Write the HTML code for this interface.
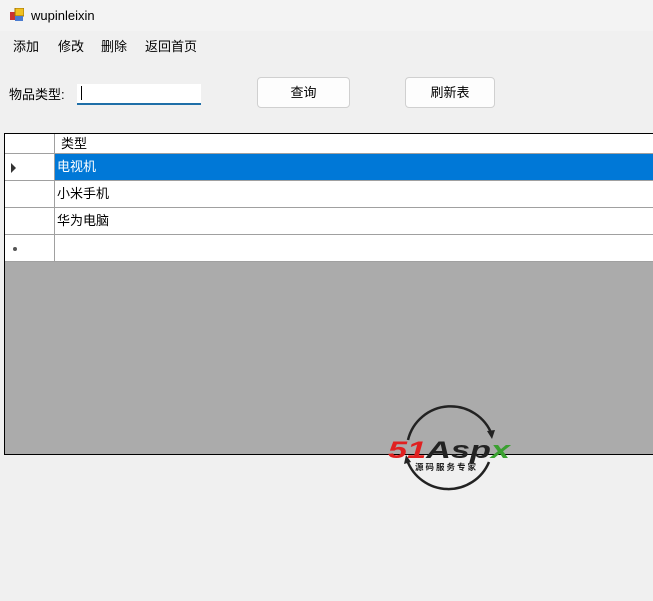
<!DOCTYPE html>
<html><head><meta charset="utf-8"><style>
body{margin:0;width:653px;height:601px;background:#f0f0f0;font-family:"Liberation Sans","Noto Sans CJK SC",sans-serif;font-size:12px;color:#000;position:relative;overflow:hidden}
.a{position:absolute}
.title{left:0;top:0;width:653px;height:31px;background:#f3f3f3}
.btn{background:#fdfdfd;border:1px solid #d0d0d0;border-radius:4px;text-align:center;line-height:29px;font-size:13px}
.grid{left:4px;top:133px;width:649px;height:322px;border:1px solid #000;border-right:none;background:#ababab;box-sizing:border-box}
.row{position:absolute;left:0;width:649px;height:27px;background:#fff;border-bottom:1px solid #a0a0a0;box-sizing:border-box}
.rh{position:absolute;left:0;top:0;width:50px;height:100%;border-right:1px solid #a0a0a0;box-sizing:border-box}
.cell{position:absolute;left:50px;top:0;right:0;height:100%;padding-left:2px;line-height:26px;font-size:13px}
</style></head><body>
<div class="a title"></div>
<svg class="a" style="left:10px;top:8px" width="14" height="14"><rect x="0" y="4" width="6" height="8" fill="#c33"/><rect x="5" y="0" width="9" height="8" fill="#f0c020" stroke="#a07000" stroke-width="1"/><rect x="5" y="8" width="8" height="5" fill="#4a7bd0"/></svg>
<div class="a" style="left:31px;top:8px;font-size:13px">wupinleixin</div>
<div class="a" style="left:13px;top:36px;font-size:13px">添加</div>
<div class="a" style="left:58px;top:36px;font-size:13px">修改</div>
<div class="a" style="left:101px;top:36px;font-size:13px">删除</div>
<div class="a" style="left:145px;top:36px;font-size:13px">返回首页</div>
<div class="a" style="left:9px;top:84px;font-size:13px">物品类型:</div>
<div class="a" style="left:77px;top:84px;width:124px;height:19px;background:#fff;border-bottom:2px solid #1f6fa8"></div>
<div class="a" style="left:81px;top:86px;width:1px;height:14px;background:#000"></div>
<div class="a btn" style="left:257px;top:77px;width:91px;height:29px">查询</div>
<div class="a btn" style="left:405px;top:77px;width:88px;height:29px">刷新表</div>
<div class="a grid">
 <div class="row" style="top:0;height:20px"><div class="rh"></div><div class="cell" style="line-height:19px;padding-left:6px">类型</div></div>
 <div class="row" style="top:20px"><div class="rh"><svg style="position:absolute;left:6px;top:9px" width="6" height="10"><path d="M0 0L5 5L0 10Z" fill="#333"/></svg></div><div class="cell" style="background:#0078d7;color:#fff">电视机</div></div>
 <div class="row" style="top:47px"><div class="rh"></div><div class="cell">小米手机</div></div>
 <div class="row" style="top:74px"><div class="rh"></div><div class="cell">华为电脑</div></div>
 <div class="row" style="top:101px"><div class="rh"><div style="position:absolute;left:8px;top:12px;width:4px;height:4px;border-radius:2px;background:#555"></div></div><div class="cell"></div></div>
</div>
<svg class="a" style="left:385px;top:400px" width="130" height="95">
 <path d="M23 40 A44 44 0 0 1 107 35" fill="none" stroke="#222" stroke-width="2.5"/>
 <path d="M104 62 A44 44 0 0 1 22 60" fill="none" stroke="#222" stroke-width="2.5"/>
 <path d="M102 31l5 8l3-9z" fill="#222"/><path d="M19 64l2-9l5 7z" fill="#222"/>
 <text x="3" y="58" font-family="Liberation Sans,sans-serif" font-size="24" font-weight="bold" font-style="italic" textLength="122" lengthAdjust="spacingAndGlyphs"><tspan fill="#e02020">51</tspan><tspan fill="#222">Asp</tspan><tspan fill="#3aa030">x</tspan></text>
 <text x="30" y="70" font-family="Noto Sans CJK SC,sans-serif" font-size="8.5" font-weight="bold" fill="#222" letter-spacing="2">源码服务专家</text>
</svg>
</body></html>
